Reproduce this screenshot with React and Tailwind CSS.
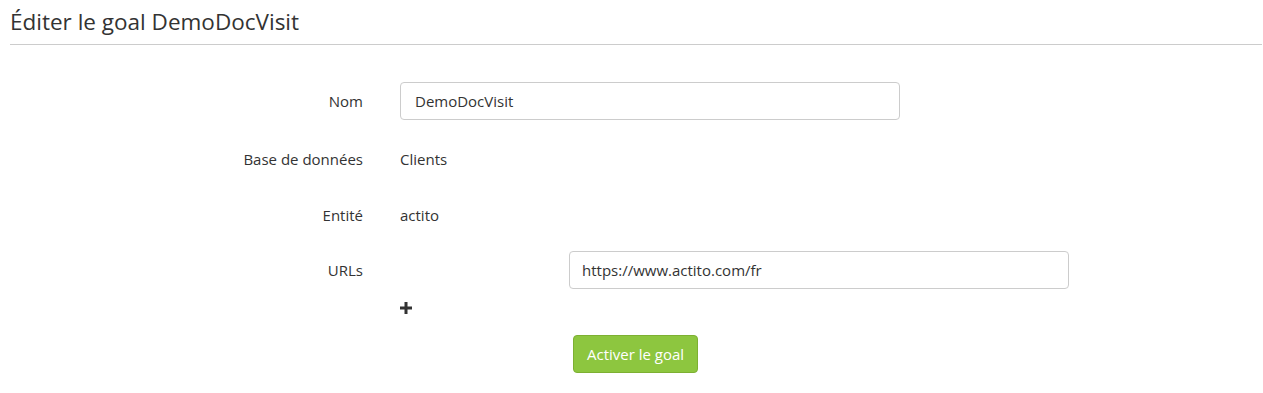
export default function App() {
  return (
    <div className="w-[1263px] h-[393px] bg-white text-[#333] font-['Open_Sans',sans-serif]">
      <div className="pl-[10px] pr-[1px]">
        <h1 className="text-[22.5px] leading-[33px] pt-[5px] pb-[6px] font-normal text-[#333] border-b border-[#cccccc]">
          Éditer le goal DemoDocVisit
        </h1>
      </div>
      <div className="text-[15px]">
        <div className="flex items-center h-[38px] mt-[37px]">
          <div className="w-[363px] text-right">Nom</div>
          <div className="pl-[37px]">
            <div className="w-[500px] h-[38px] border border-[#cccccc] rounded-[4px] flex items-center px-[14px]">DemoDocVisit</div>
          </div>
        </div>
        <div className="flex items-center h-[38px] mt-[20px]">
          <div className="w-[363px] text-right">Base de données</div>
          <div className="pl-[37px]">Clients</div>
        </div>
        <div className="flex items-center h-[38px] mt-[18px]">
          <div className="w-[363px] text-right">Entité</div>
          <div className="pl-[37px]">actito</div>
        </div>
        <div className="flex items-center h-[38px] mt-[17px]">
          <div className="w-[363px] text-right">URLs</div>
          <div className="pl-[206px]">
            <div className="w-[500px] h-[38px] border border-[#cccccc] rounded-[4px] flex items-center px-[12px]">https://www.actito.com/fr</div>
          </div>
        </div>
        <div className="pl-[400px] mt-[13px]">
          <svg width="12" height="12" viewBox="0 0 12 12" className="block">
            <rect x="4.5" y="0" width="3" height="12" fill="#333" />
            <rect x="0" y="4.5" width="12" height="3" fill="#333" />
          </svg>
        </div>
        <div className="pl-[573px] mt-[21px]">
          <button className="h-[38px] px-[13px] bg-[#8dc63f] border border-[#7db032] rounded-[4px] text-white text-[15px]">Activer le goal</button>
        </div>
      </div>
    </div>
  );
}
